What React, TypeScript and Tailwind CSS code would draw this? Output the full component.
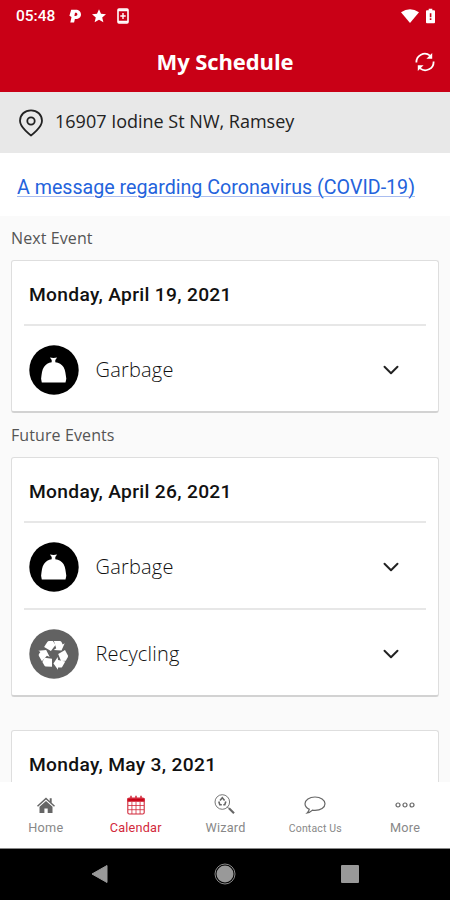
import React from 'react';
import { ChevronDown } from 'lucide-react';

type Pickup = 'Garbage' | 'Recycling';

interface EventCardProps {
  date: string;
  pickups: Pickup[];
}

const GarbageIcon: React.FC = () => (
  <svg viewBox="0 0 50 50" className="h-[50px] w-[50px]">
    <circle cx="25" cy="25" r="24.7" fill="#000" />
    <path
      d="M20.9 12.4l3.6.6 3.6-.6-1.8 2.5v2.3c3.5.4 6.5 2.1 8.2 4.8 1.9 3 2.1 6.8 2.8 11.7l-.8 3.8H12.8l-.7-3.8c.6-4.9.9-8.8 2.9-11.7 1.7-2.6 4.4-4.3 7.7-4.8v-2.3z"
      fill="#fff"
    />
  </svg>
);

const RecyclingIcon: React.FC = () => {
  const arrow = (
    <>
      <path d="M-9.6-7.5L-6.4-12.7Q-5.7-13.5-4.7-13.5H-.8L1.8-9.5L-2.8-3.6z" />
      <path d="M.2-13.5H6.2Q7.2-13.5 7.8-12.5L9-10.2L11-11.3L7.8-4.2L0-4.6L2.5-6.4z" />
    </>
  );
  return (
    <svg viewBox="-25 -25 50 50" className="h-[50px] w-[50px]">
      <circle r="24.7" fill="#626262" />
      <g fill="#fff" transform="translate(-.3 .6)">
        <g>{arrow}</g>
        <g transform="rotate(120)">{arrow}</g>
        <g transform="rotate(240)">{arrow}</g>
      </g>
    </svg>
  );
};

const PinIcon: React.FC = () => (
  <svg viewBox="0 0 24 28" className="h-7 w-6" fill="none" stroke="#222" strokeWidth="1.8">
    <path d="M12 26.4S1 18.7 1 11.8C1 5.7 5.8 1.3 12 1.3s11 4.4 11 10.5c0 6.9-11 14.6-11 14.6z" />
    <circle cx="12" cy="12" r="3.7" />
  </svg>
);

const StatusBar: React.FC = () => (
  <div className="flex h-8 items-center justify-between pl-4 pr-[15px] text-white">
    <div className="flex items-center">
      <span className="w-[40px] whitespace-nowrap font-[Roboto] text-[15.5px] font-medium leading-8">05:48</span>
      <svg viewBox="0 0 12 14" className="ml-[12.5px] h-[14px] w-3" fill="#fff">
        <path
          d="M2.2.8h4.6C9.8.8 12 2.7 12 5.4S9.8 10 6.8 10h-.9l-.8 3.6H1.3L2.5 8 .4 6.8zM6 3.7L5.4 7h1c1.3 0 2-.7 2-1.7S7.700 3.700 6.700 3.700z"
          fillRule="evenodd"
        />
      </svg>
      <svg viewBox="0 0 14 14" className="ml-[11px] h-[14px] w-[14px]" fill="#fff">
        <path d="M7 .2l2 4.500 5 .5-3.800 3.200 1.200 4.900L7 10.700l-4.400 2.600 1.200-4.900L0 5.200l5-.5z" />
      </svg>
      <svg viewBox="0 0 12 16" className="ml-[11px] h-4 w-3" fill="none" stroke="#fff">
        <rect x="1" y="1" width="10" height="14" rx="1" strokeWidth="1.6" />
        <path d="M1 2.3h10M1 13.700h10" strokeWidth="2" />
        <path d="M6 5v6M3.300 8h5.400" strokeWidth="1.4" />
      </svg>
    </div>
    <div className="flex items-center">
      <svg viewBox="0 0 18 14" className="h-[14px] w-[18px]" fill="#fff">
        <path d="M0 3.300Q9-3 18 3.300L9 14z" />
      </svg>
      <svg viewBox="0 0 10 16" className="ml-[7px] h-4 w-[9px]">
        <path d="M3 0h4v1.700h2q1 0 1 1V15q0 1-1 1H1q-1 0-1-1V2.700q0-1 1-1h2z" fill="#fff" />
        <path d="M4.200 5h1.800v4.300H4.200zM4.200 10.600h1.800v1.800H4.200z" fill="#c90016" />
      </svg>
    </div>
  </div>
);

const Header: React.FC = () => (
  <header className="h-[92px] shrink-0 bg-[#c90016] text-white">
    <StatusBar />
    <div className="grid h-[60px] grid-cols-[50px_1fr_50px] items-center">
      <h1 className="col-start-2 pb-0.5 text-center text-[22px] font-bold tracking-[-0.1px]">My Schedule</h1>
      <svg viewBox="0 0 20 20" className="ml-[15px] h-5 w-5" fill="none" stroke="#fff" strokeWidth="1.8">
        <path d="M1.400 10.500A8.400 8.400 0 0115 3.600M18.600 9.500A8.400 8.400 0 015 16.400" />
        <path d="M17.200.9v5.800h-5.800zM2.800 19.100v-5.800h5.800z" fill="#fff" stroke="none" />
      </svg>
    </div>
  </header>
);

const EventCard: React.FC<EventCardProps> = ({ date, pickups }) => (
  <section className="mx-[11px] rounded-[3px] border border-b-2 border-[#dedede] border-b-[#d2d2d2] bg-white px-3">
    <h2 className="flex h-[63px] items-center pl-[5px] pt-[6px] font-[Roboto] text-[19.2px] font-medium tracking-[0.32px] text-[#111]">
      {date}
    </h2>
    {pickups.map((pickup) => (
      <div key={pickup} className="flex h-[87px] items-center border-t-2 border-[#e7e7e7] pb-px pl-[5px] pt-[3px]">
        {pickup === 'Garbage' ? <GarbageIcon /> : <RecyclingIcon />}
        <span className="ml-[16.5px] flex-1 text-[20px] font-light tracking-[0.2px] text-[#111]">{pickup}</span>
        <ChevronDown className="mr-[22px] h-[26px] w-[26px] text-[#222]" strokeWidth={1.8} />
      </div>
    ))}
  </section>
);

const HomeIcon: React.FC = () => (
  <svg viewBox="0 0 18 16" className="h-4 w-[18px]" fill="#666">
    <path d="M9 .5l3.700 3.400V1.300h2v4.500L18 8.700l-1 1.100L9 2.600 1 9.800 0 8.700z" />
    <path d="M9 4l6.500 5.800V16h-4.800v-4.500H7.400V16H2.500V9.800z" />
  </svg>
);

const CalendarIcon: React.FC = () => (
  <svg viewBox="0 0 18 20" className="h-5 w-[18px]" fill="none" stroke="#d2283a">
    <rect x=".8" y="3" width="16.4" height="16" rx="1.5" strokeWidth="1.1" />
    <path d="M.8 3.500h16.400v2.800H.8z" fill="#c90016" />
    <path d="M4 .8v3.500M9 .8v3.500M14 .8v3.500" strokeWidth="1.5" />
    <path d="M1 10.500h16M1 14.700h16M4.900 7v12M9 7v12M13.100 7v12" strokeWidth=".8" />
  </svg>
);

const WizardIcon: React.FC = () => (
  <svg viewBox="0 0 22 21" className="h-[21px] w-[22px]" fill="none" stroke="#666">
    <circle cx="8.3" cy="8" r="7.3" strokeWidth=".9" />
    <path d="M6 6.600l2.300-2.800 2.300 2.800M4.800 7.600l1 3.200h2M11.800 7.600l-1 3.200H9.300" strokeWidth="1.6" />
    <path d="M13.200 12.800l2 2" />
    <path d="M15 14.300l5 4.900" strokeWidth="2.2" />
  </svg>
);

const ContactIcon: React.FC = () => (
  <svg viewBox="0 0 22 18" className="h-[18px] w-[22px]" fill="none" stroke="#666" strokeWidth="1.2">
    <path d="M5.300 13.200C2.600 12 1 10 1 7.700 1 3.900 5.400 1 11 1s10 2.900 10 6.700-4.400 6.600-10 6.600q-1.300 0-2.500-.2-2.500 2.400-5.300 2.900 1.700-1.600 2.100-3.800z" />
  </svg>
);

const MoreIcon: React.FC = () => (
  <svg viewBox="0 0 20 6" className="h-[6px] w-5" fill="none" stroke="#666" strokeWidth="1.2">
    <circle cx="3" cy="3" r="2" />
    <circle cx="10" cy="3" r="2" />
    <circle cx="17" cy="3" r="2" />
  </svg>
);

const tabs = [
  { name: 'Home', icon: <HomeIcon />, label: 'text-[12.7px] text-[#888] tracking-[0.3px]' },
  { name: 'Calendar', icon: <CalendarIcon />, label: 'text-[12.7px] text-[#d2283a] tracking-[0.2px]' },
  { name: 'Wizard', icon: <WizardIcon />, label: 'text-[12.7px] text-[#888] tracking-[0.2px] pt-px' },
  { name: 'Contact Us', icon: <ContactIcon />, label: 'text-[10.5px] text-[#888] tracking-[0.15px] pt-[2px]' },
  { name: 'More', icon: <MoreIcon />, label: 'text-[12.7px] text-[#888] tracking-[0.3px] pt-px' },
];

const TabBar: React.FC = () => (
  <nav className="grid h-[67px] shrink-0 grid-cols-5 border-b border-[#888] bg-white pl-px font-[Roboto]">
    {tabs.map((tab) => (
      <div key={tab.name} className="flex flex-col items-center pt-[11px]">
        <div className="flex h-[23px] items-center">{tab.icon}</div>
        <span className={`flex h-[23px] items-center whitespace-nowrap ${tab.label}`}>{tab.name}</span>
      </div>
    ))}
  </nav>
);

const SystemBar: React.FC = () => (
  <div className="flex h-[51px] shrink-0 items-center justify-between bg-black px-[91px] pb-[2px]">
    <svg viewBox="0 0 18 20" className="h-5 w-[18px]" fill="#999">
      <path d="M16 1.500v17L1 10z" stroke="#999" strokeLinejoin="round" />
    </svg>
    <svg viewBox="0 0 22 22" className="h-[22px] w-[22px]" fill="none">
      <circle cx="11" cy="11" r="10" stroke="#888" />
      <circle cx="11" cy="11" r="8.5" fill="#999" />
    </svg>
    <div className="h-[18px] w-[18px] rounded-[1px] bg-[#999]" />
  </div>
);

const App: React.FC = () => {
  return (
    <div className="flex h-[900px] w-[450px] flex-col overflow-hidden bg-[#fafafa] font-['Open_Sans',sans-serif]">
      <Header />
      <div className="flex h-[61px] shrink-0 items-center bg-[#e8e8e8] pl-[19px]">
        <PinIcon />
        <span className="ml-3 whitespace-nowrap pb-[3px] text-[18px] text-[#222]">16907 Iodine St NW, Ramsey</span>
      </div>
      <div className="flex h-[63px] shrink-0 items-center bg-white pl-[17px] pt-[6px]">
        <a
          href="#"
          className="whitespace-nowrap font-[Roboto] text-[19.65px] text-[#2463dc] underline decoration-[#a9bdf0] decoration-1 underline-offset-2"
        >
          A message regarding Coronavirus (COVID-19)
        </a>
      </div>
      <main className="min-h-0 flex-1 overflow-hidden">
        <p className="h-[44px] pl-[11px] pt-[10px] text-[16px] leading-6 tracking-[0.1px] text-[#555]">Next Event</p>
        <EventCard date="Monday, April 19, 2021" pickups={['Garbage']} />
        <p className="h-[44px] pl-[11px] pt-[10px] text-[16px] leading-6 tracking-[0.1px] text-[#555]">Future Events</p>
        <EventCard date="Monday, April 26, 2021" pickups={['Garbage', 'Recycling']} />
        <div className="h-[33px]" />
        <EventCard date="Monday, May 3, 2021" pickups={[]} />
      </main>
      <TabBar />
      <SystemBar />
    </div>
  );
};

export default App;
